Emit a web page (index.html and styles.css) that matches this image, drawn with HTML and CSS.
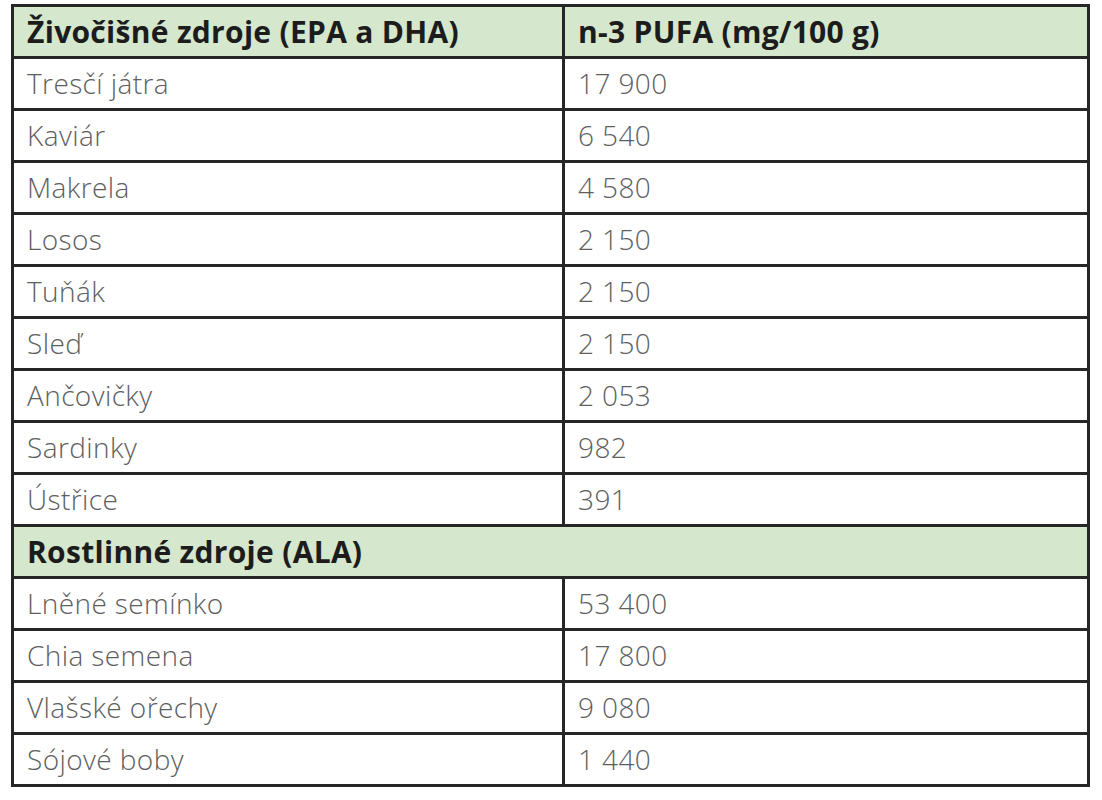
FILE: index.html
```html
<!DOCTYPE html>
<html lang="cs">
<head>
<meta charset="utf-8">
<title>Zdroje n-3 PUFA</title>
<link rel="stylesheet" href="styles.css">
</head>
<body>
<table class="pufa">
  <colgroup><col class="c1"><col class="c2"></colgroup>
  <tr class="head"><th>Živočišné zdroje (EPA a DHA)</th><th>n-3 PUFA (mg/100 g)</th></tr>
  <tr><td>Tresčí játra</td><td>17 900</td></tr>
  <tr><td>Kaviár</td><td>6 540</td></tr>
  <tr><td>Makrela</td><td>4 580</td></tr>
  <tr><td>Losos</td><td>2 150</td></tr>
  <tr><td>Tuňák</td><td>2 150</td></tr>
  <tr><td>Sleď</td><td>2 150</td></tr>
  <tr><td>Ančovičky</td><td>2 053</td></tr>
  <tr><td>Sardinky</td><td>982</td></tr>
  <tr><td>Ústřice</td><td>391</td></tr>
  <tr class="head"><th colspan="2">Rostlinné zdroje (ALA)</th></tr>
  <tr><td>Lněné semínko</td><td>53 400</td></tr>
  <tr><td>Chia semena</td><td>17 800</td></tr>
  <tr><td>Vlašské ořechy</td><td>9 080</td></tr>
  <tr><td>Sójové boby</td><td>1 440</td></tr>
</table>
</body>
</html>
```
FILE: styles.css
```css
html, body {
  margin: 0;
  background: #ffffff;
}
body {
  padding: 4px 0 0 11px;
}
.pufa {
  border-collapse: collapse;
  width: 1079px;
  table-layout: fixed;
  font-family: "Open Sans", "Liberation Sans", sans-serif;
  font-size: 28px;
  line-height: 1.3;
}
.c1 { width: 551px; }
.pufa th, .pufa td {
  border: 3px solid #262626;
  height: 47px;
  padding: 1px 0 1px 13px;
  text-align: left;
  vertical-align: middle;
  white-space: nowrap;
}
.pufa td {
  color: #5e5e5e;
  font-weight: 300;
  letter-spacing: 0.4px;
}
.pufa th {
  color: #1c1c1c;
  font-size: 30px;
  font-weight: 700;
  letter-spacing: 0.3px;
}
.head {
  background: #d5e7cc;
}
```
